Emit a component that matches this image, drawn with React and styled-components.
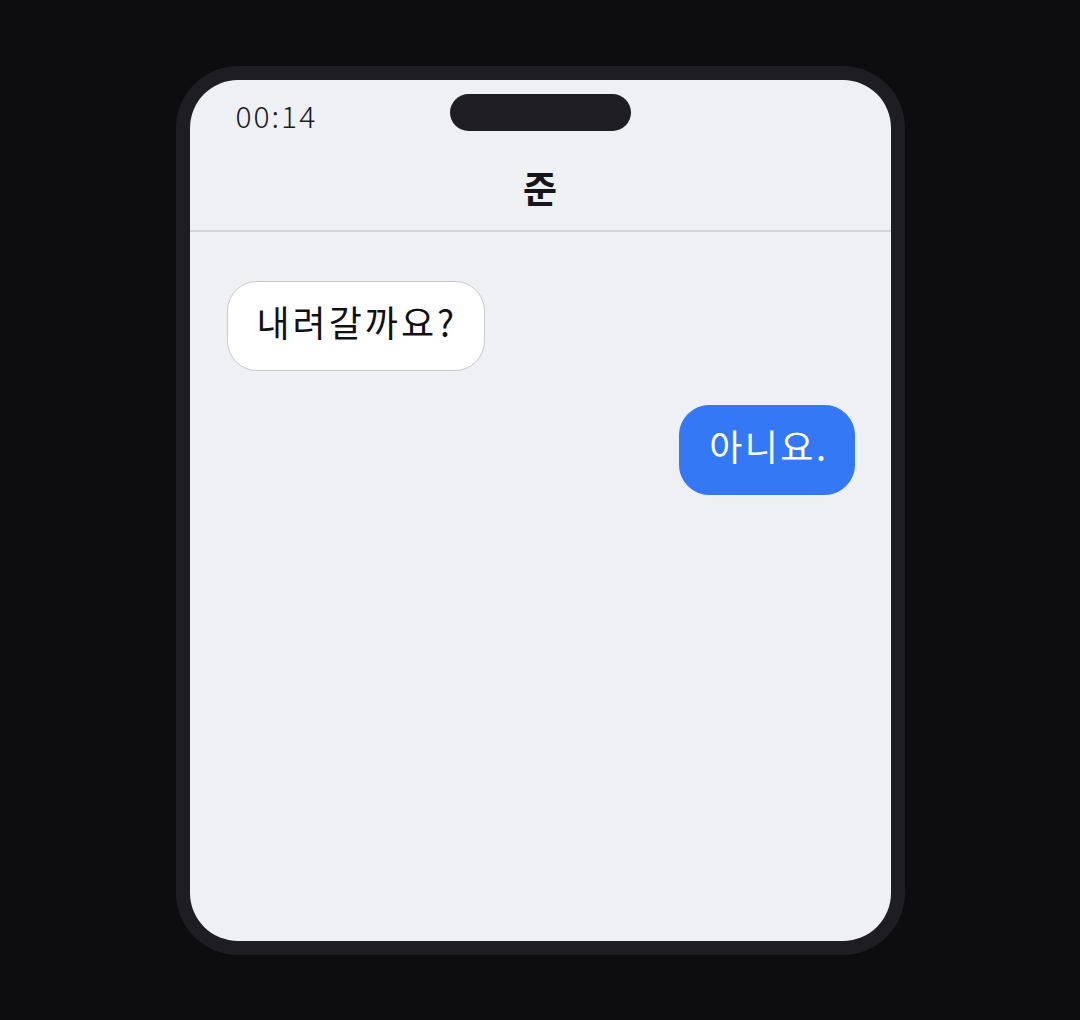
import React from "react"
import styled, { createGlobalStyle } from "styled-components"

const GlobalStyle = createGlobalStyle`
  html, body {
    margin: 0;
    padding: 0;
    background: #0d0d10;
  }
  body {
    font-family: "Noto Sans CJK KR", "Noto Sans", sans-serif;
  }
`

// Page that centers the phone in the window
const Stage = styled.div`
  min-height: 100vh;
  display: flex;
  justify-content: center;
  align-items: center;
`

const PhoneFrame = styled.div`
  padding: 14px;
  background: #1e1e22;
  border-radius: 62px;
`

const Screen = styled.div`
  width: 701px;
  height: 861px;
  border-radius: 48px;
  background: #eff0f4;
  overflow: hidden;
  display: flex;
  flex-direction: column;
`

const StatusBar = styled.div`
  display: grid;
  grid-template-columns: 1fr 181px 1fr;
  align-items: center;
  height: 37px;
  margin-top: 14px;
`

const Clock = styled.span`
  padding-left: 46px;
  font-size: 30px;
  font-weight: 300;
  letter-spacing: 2px;
  color: #1c1c1f;
  line-height: 1;
  margin-top: 6px;
`

const Island = styled.div`
  height: 37px;
  border-radius: 19px;
  background: #1e1e22;
`

const Header = styled.header`
  height: 101px;
  display: flex;
  justify-content: center;
  align-items: center;
  padding-top: 14px;
  box-sizing: border-box;
  border-bottom: 2px solid #d3d4d9;
`

const Title = styled.h1`
  margin: 0;
  font-size: 37px;
  font-weight: 700;
  color: #16161a;
  line-height: 1;
`

const Thread = styled.div`
  display: flex;
  flex-direction: column;
  gap: 34px;
  padding: 49px 36px 0 37px;
`

const Bubble = styled.div`
  align-self: ${({ $mine }) => ($mine ? "flex-end" : "flex-start")};
  padding: ${({ $mine }) => ($mine ? "0 25px 10px 29px" : "0 27px 9px 29px")};
  height: 90px;
  box-sizing: border-box;
  display: flex;
  align-items: center;
  border-radius: 30px;
  font-size: 36px;
  font-weight: 400;
  letter-spacing: ${({ $mine }) => ($mine ? "2.5px" : "3px")};
  line-height: 1;
  background: ${({ $mine }) => ($mine ? "#3478f6" : "#ffffff")};
  color: ${({ $mine }) => ($mine ? "#ffffff" : "#111114")};
  border: 1px solid ${({ $mine }) => ($mine ? "#3478f6" : "#c9cacf")};
`

const messages = [
  { id: 1, text: "내려갈까요?", mine: false },
  { id: 2, text: "아니요.", mine: true },
]

const App = () => {
  return (
    <Stage>
      <GlobalStyle />
      <PhoneFrame>
        <Screen>
          <StatusBar>
            <Clock>00:14</Clock>
            <Island />
            <span />
          </StatusBar>
          <Header>
            <Title>준</Title>
          </Header>
          <Thread>
            {messages.map((m) => (
              <Bubble key={m.id} $mine={m.mine}>
                {m.text}
              </Bubble>
            ))}
          </Thread>
        </Screen>
      </PhoneFrame>
    </Stage>
  )
}

export default App
